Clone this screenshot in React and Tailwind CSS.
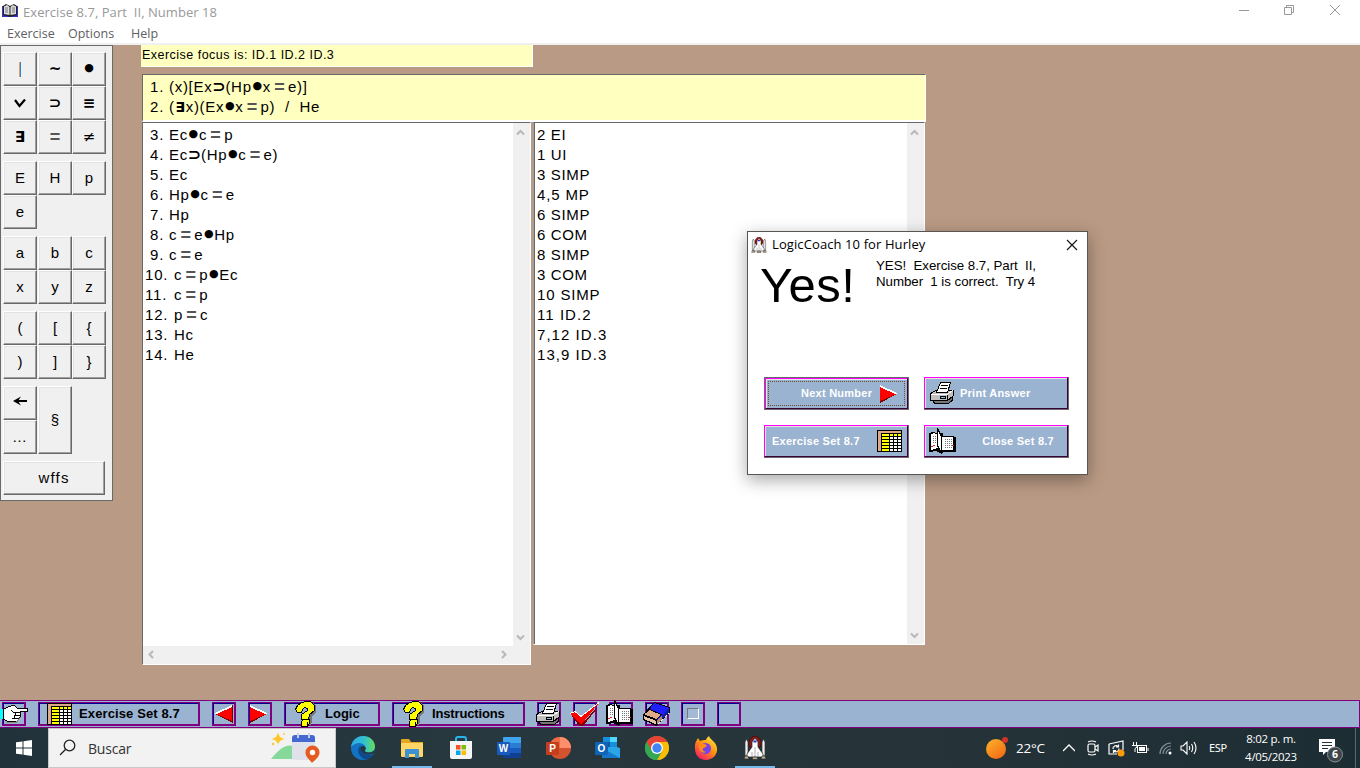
import React from "react";

const proof = [
  ["\u00a03.", "Ec●c=p", "2 EI"],
  ["\u00a04.", "Ec⊃(Hp●c=e)", "1 UI"],
  ["\u00a05.", "Ec", "3 SIMP"],
  ["\u00a06.", "Hp●c=e", "4,5 MP"],
  ["\u00a07.", "Hp", "6 SIMP"],
  ["\u00a08.", "c=e●Hp", "6 COM"],
  ["\u00a09.", "c=e", "8 SIMP"],
  ["10.", "c=p●Ec", "3 COM"],
  ["11.", "c=p", "10 SIMP"],
  ["12.", "p=c", "11 ID.2"],
  ["13.", "Hc", "7,12 ID.3"],
  ["14.", "He", "13,9 ID.3"],
];

function Sym({ c }) {
  if (c === "●")
    return <span className="inline-flex h-[18px] w-[11px] items-center justify-center align-top font-['DejaVu_Sans'] text-[11px] leading-[18px] tracking-normal">●</span>;
  if (c === "⊃")
    return <span className="inline-flex h-5 w-[13px] items-center justify-center align-top font-['DejaVu_Sans'] text-[16px] leading-5 font-bold tracking-normal">⊃</span>;
  if (c === "∃")
    return <span className="inline-flex h-5 w-[11px] items-center justify-center align-top font-['DejaVu_Sans'] text-[14px] leading-5 font-bold tracking-normal">∃</span>;
  if (c === "=")
    return <span className="inline-flex h-5 w-[17px] items-center justify-center align-top font-bold leading-5 tracking-normal text-[#555] text-[18px]">=</span>;
  return c;
}

function Formula({ n, f }) {
  return (
    <div className="flex h-5 leading-5 whitespace-pre">
      <span className={n.startsWith("\u00a0") ? "w-[24px] shrink-0 pl-[5px] tracking-[1px]" : "w-[29px] shrink-0 tracking-[0.800px]"}>{n.trim()}</span>
      <span>{[...f].map((c, i) => <Sym c={c} key={i} />)}</span>
    </div>
  );
}

const raised = "flex h-[34px] w-[34px] items-center justify-center border border-t-white border-l-white border-r-[#696969] border-b-[#696969] bg-[#f0f0f0] pt-px shadow-[inset_-1px_-1px_#a0a0a0,inset_1px_1px_#e3e3e3] text-[15px]";

function Key({ c }) {
  const sym = "⊃≡∃~".includes(c);
  return (
    <div className={raised}>
      {c === "|" ? (
        <span className="h-[15px] w-[2px] border-l border-[#d8a070] bg-[#2a86d8]" />
      ) : c === "●" ? (
        <span className="pb-[3px] font-['DejaVu_Sans'] text-[11px]">●</span>
      ) : c === "v" ? (
        <svg width="12" height="9" viewBox="0 0 12 9"><path d="M1 1L5.5 7L11 .5" fill="none" stroke="#000" strokeWidth="2.2" /></svg>
      ) : c === "←" ? (
        <svg width="14" height="10" viewBox="0 0 14 10" className="mb-[5px]"><path d="M2 5H14" stroke="#000" strokeWidth="2" /><path d="M0 5L8 .5L5 5L8 9.500Z" fill="#000" /></svg>
      ) : (
        <span className={sym ? "font-['DejaVu_Sans'] text-[15px] font-bold" : c === "≠" ? "font-['DejaVu_Sans'] text-[15px]" : c === "=" ? "text-[18px] font-bold text-[#555]" : c === "…" ? "tracking-[1px]" : ""}>{c}</span>
      )}
    </div>
  );
}

function Rows({ rows }) {
  return (
    <div className="grid grid-cols-[35px_34px_34px]">
      {rows.map((c, i) => <Key key={i} c={c} />)}
    </div>
  );
}

function Chevron({ d, className }) {
  return (
    <svg width="9" height="9" viewBox="0 0 9 9" className={className}>
      <path d={d} fill="none" stroke="#b8b8b8" strokeWidth="2" />
    </svg>
  );
}
const UP = "M1 6.500L4.500 3L8 6.500";
const DOWN = "M1 2.500L4.500 6L8 2.500";
const LEFT = "M6 1L2.500 4.500L6 8";
const RIGHT = "M3 1L6.500 4.500L3 8";

const TableIcon = ({ className }) => (
  <svg width="25" height="22" viewBox="0 0 25 22" shapeRendering="crispEdges" className={className}>
    <path d="M0 0H25V22H0Z" fill="#000" />
    <path d="M1 1H24V3H4V21H1Z" fill="#dca888" />
    <path d="M5 4H12V6H5ZM5 7H12V9H5ZM5 10H12V12H5ZM5 13H12V15H5ZM5 16H12V18H5ZM5 19H12V21H5ZM13 4H16V6H13ZM17 4H20V6H17ZM21 4H24V6H21Z" fill="#ff0" />
    <path d="M13 7H16V9H13ZM17 7H20V9H17ZM21 7H24V9H21ZM13 10H16V12H13ZM17 10H20V12H17ZM21 10H24V12H21ZM13 13H16V15H13ZM17 13H20V15H17ZM21 13H24V15H21ZM13 16H16V18H13ZM17 16H20V18H17ZM21 16H24V18H21ZM13 19H16V21H13ZM17 19H20V21H17ZM21 19H24V21H21Z" fill="#fff" />
  </svg>
);

const PrinterIcon = ({ className }) => (
  <svg width="25" height="22" viewBox="0 0 25 22" shapeRendering="crispEdges" className={className}>
    <path d="M3 18.500H17.500L22.500 15V18L18.500 21.500H5L3 20Z" fill="#777" stroke="#000" />
    <path d="M.5 11.500L6 8.500H23.500V13.500L17.500 18.500H.5Z" fill="#c0c0c0" stroke="#000" />
    <path d="M1 12H18L23 8" fill="none" stroke="#fff" />
    <path d="M17.500 13V18" stroke="#000" />
    <path d="M6.500 10.500L10.500 .5H20.500L17.500 10.500Z" fill="#fff" stroke="#000" />
    <path d="M11 3.500H18M10 6.500H17" stroke="#000" />
    <path d="M10.500 14.500H15.500V16.500H10.500Z" fill="#79c8f0" stroke="#000" />
  </svg>
);

const BookIcon = ({ className }) => (
  <svg width="27" height="26" viewBox="0 0 27 26" shapeRendering="crispEdges" className={className}>
    <path d="M14 8H25V9H27V24H14V25H11L7 23L0 24V5H2V4H6V5H14Z" fill="#000" />
    <path d="M2 6L5 5L9 7V20L2 22Z" fill="#fff" />
    <path d="M13 9H24V22H13Z" fill="#fff" />
    <path d="M8.500 .5L12.500 8.500V24.500L8.500 17.500Z" fill="#fff" stroke="#000" />
    <path d="M4 8.500H8M4 10.500H8M4 12.500H8M4 14.500H8M16 11.500H23M16 13.500H23M16 15.500H23M16 17.500H23M16 19.500H23" stroke="#777" strokeDasharray="1 1" />
    <path d="M2 18.500H4M4 17.500H6M23 17.500H25" fill="none" stroke="#e02020" />
  </svg>
);

const RightArrow = ({ className }) => (
  <svg width="18" height="18" viewBox="0 0 18 18" shapeRendering="crispEdges" className={className}>
    <path d="M0 1L17 9L0 18Z" fill="#700" />
    <path d="M0 1L17 9L0 16Z" fill="#f00" />
    <path d="M0 0L17 8V9H15L0 2Z" fill="#fff" />
  </svg>
);

const LeftArrow = ({ className }) => (
  <svg width="18" height="18" viewBox="0 0 18 18" shapeRendering="crispEdges" className={className}>
    <path d="M18 0V18L0 9Z" fill="#700" />
    <path d="M17 1V16L1 9Z" fill="#f00" />
    <path d="M17 0L0 8V9H2L17 2Z" fill="#fff" />
  </svg>
);

const Question = ({ className }) => (
  <svg width="24" height="26" viewBox="0 0 24 26" shapeRendering="crispEdges" className={className}>
    <path d="M8 2H18L21 5V11L17 15V20L16 24H12V14L15 9Z" fill="#777" />
    <path d="M.5 8.500L2.500 4.500L6.500 1.500L11.500 .5H15.500L19.500 4.500V9.500L14.500 13.500L13.500 18.500H6.500V13.500L12.500 9.500V7.500L9.500 6.500L7.500 8.500L6.500 11.500H2.500Z" fill="#ff0" stroke="#000" />
    <path d="M6.500 20.500L8.500 18.500H14.500V22.500L12.500 25.500H6.500Z" fill="#ff0" stroke="#000" />
    <path d="M12.500 21V25" fill="none" stroke="#000" />
  </svg>
);

const Hand = ({ className }) => (
  <svg width="29" height="20" viewBox="0 0 29 20" shapeRendering="crispEdges" className={className}>
    <path d="M0 5H4V15H0Z" fill="#0ff" />
    <path d="M3.500 5.500L8.500 2.500L14.500 1.500L17.500 4.500H27.500V7.500H20.500V11.500L19.500 14.500L16.500 17.500H8.500L3.500 15.500Z" fill="#fff" stroke="#000" />
    <path d="M11 6.500L14 8.500H20M15.500 9V11.500H20M14.500 11V14.500H19M12 14.500H17" fill="none" stroke="#000" />
    <path d="M6 18.500H16L21 13" fill="none" stroke="#888" />
  </svg>
);

const Check = ({ className }) => (
  <svg width="32" height="24" viewBox="0 0 32 24" shapeRendering="crispEdges" className={className}>
    <path d="M4 14L12 23L31 3L14 24H10L3 14Z" fill="#700" />
    <path d="M1 12L6 10L12 15L30 1L12 23Z" fill="#f00" />
    <path d="M12 23L31 2L14 24H11Z" fill="#700" />
    <path d="M1 11.500L6 9.500L12 14.500L30 .5" fill="none" stroke="#fff" />
  </svg>
);

const Eraser = ({ className }) => (
  <svg width="27" height="24" viewBox="0 0 27 24" shapeRendering="crispEdges" className={className}>
    <path d="M.5 12.500L11.500 .5L26.500 5.500V10.500L13.500 23.500L.5 17.500Z" fill="#2020ff" stroke="#000" />
    <path d="M.5 12.500L6.500 7.500L18.500 12.500L13.500 17.500Z" fill="#dcaa88" stroke="#000" />
    <path d="M.5 13.500L13.500 18.500V23L.5 17.500Z" fill="#e8c4a8" stroke="#000" />
    <path d="M14 18L19 13V17L14 22Z" fill="#b88868" />
    <path d="M19 13L26 6V10L19 17Z" fill="#1020a0" />
    <path d="M15 22L26 11" fill="none" stroke="#fff" strokeDasharray="1 1" />
  </svg>
);

const Rocket = ({ w, h, className }) => (
  <svg width={w} height={h} viewBox="0 0 22 24" className={className}>
    <path d="M5 9V5L8 1L11 0L14 1L17 5V9L15 12H7Z" fill="#8b1a1a" stroke="#300" strokeWidth=".6" />
    <path d="M1 6L2.500 3L4 6V20H1ZM21 6L19.500 3L18 6V20H21Z" fill="#eee" stroke="#333" strokeWidth=".7" />
    <path d="M11 2L14 6V11L19 18V21H3V18L8 11V6Z" fill="#fff" stroke="#222" strokeWidth=".7" />
    <path d="M9.500 4.500H12.500V6.500H9.500Z" fill="#2535d0" />
    <path d="M11 11V21M8 16V21M14 16V21" stroke="#999" strokeWidth=".8" />
    <path d="M1 20H4L5 23H0ZM18 20H21L22 23H17ZM9 21H13L14 23.500H8Z" fill="#b5a98c" stroke="#222" strokeWidth=".6" />
  </svg>
);

function DialogButton({ children, focused }) {
  return (
    <div className={"flex h-[33px] w-[145px] border-r border-b border-[#696969] " + (focused ? "border bg-[#696969]" : "")}>
      <div className="flex min-w-0 flex-1 border border-t-[#ff00ff] border-l-[#ff00ff] border-r-[#3a003a] border-b-[#3a003a] bg-[#9ab3d1] shadow-[inset_1px_1px_#e3e3e3]">
        <div className={"flex flex-1 items-center whitespace-nowrap text-[11px] font-bold tracking-[0.250px] text-white " + (focused ? "m-[2px] border border-dotted border-[#6a4a2a]" : "m-[3px]")}>{children}</div>
      </div>
    </div>
  );
}

const tool = "flex h-6 shrink-0 items-center border border-r-2 border-b-2 border-[#800080] shadow-[inset_1px_1px_#000090] text-[13px] font-bold whitespace-nowrap";

function Slot({ children, active }) {
  return (
    <div className={"flex h-10 w-[49px] items-center justify-center " + (active ? "bg-[linear-gradient(#76b9ed,#76b9ed)] bg-[length:40px_2px] bg-bottom bg-no-repeat" : "")}>{children}</div>
  );
}

function Office({ letter, color, children }) {
  return (
    <svg width="26" height="24" viewBox="0 0 26 24">
      {children}
      <rect x="0" y="6" width="13" height="13" rx="1" fill={color} />
      <text x="6.500" y="16.200" textAnchor="middle" fontFamily="Liberation Sans, sans-serif" fontWeight="bold" fontSize="10" fill="#fff">{letter}</text>
    </svg>
  );
}

export default function App() {
  return (
    <div className="relative flex h-[768px] w-[1360px] flex-col overflow-hidden bg-[#b99a84] font-['Liberation_Sans',sans-serif] text-black">
      <header className="flex h-[45px] shrink-0 flex-col border-b-2 border-[#f0f0f0] bg-white font-['Open_Sans',sans-serif] text-[13px]">
        <div className="flex h-[26px] items-center pl-[2px] text-[#999]">
          <svg width="16" height="14" viewBox="0 0 16 14" className="mb-[4px]">
            <path d="M0 2H16V13H0Z" fill="#3434c8" />
            <path d="M1 2L4 0L8 2L12 0L15 2V11L8 13L1 11Z" fill="#222" />
            <path d="M2 2.500L5 1L7.500 3V11L2 10ZM8.500 3L11 1L14 2.500V10L8.500 11Z" fill="#ddd" />
            <path d="M3 4H6M3 6H6M3 8H6M10 4H13M10 6H13M10 8H13" stroke="#777" />
          </svg>
          <span className="ml-[5px] text-[13px] tracking-[0.050px] whitespace-pre">Exercise 8.7, Part  II, Number 18</span>
          <svg width="102" height="12" viewBox="0 0 102 12" className="mr-[19px] mb-[6px] ml-auto" fill="none" stroke="#999">
            <path d="M0 6.500H10M45.500 3.500H52.500V10.500H45.500ZM47.500 3.500V1.500H54.500V8.500H52.500M91 1L101 11M101 1L91 11" />
          </svg>
        </div>
        <nav className="flex h-[17px] items-center pl-[7px] text-[12.500px] text-[#606060]">
          <span className="w-[61px]">Exercise</span>
          <span className="w-[63px]">Options</span>
          <span>Help</span>
        </nav>
      </header>

      <main className="flex h-[655px] shrink-0">
        <aside className="flex h-[456px] w-[113px] flex-col gap-[7px] border border-[#696969] bg-[#f0f0f0] pt-[6px] pl-[2px]">
          <Rows rows={["|", "~", "●", "v", "⊃", "≡", "∃", "=", "≠"]} />
          <Rows rows={["E", "H", "p", "e"]} />
          <Rows rows={["a", "b", "c", "x", "y", "z"]} />
          <Rows rows={["(", "[", "{", ")", "]", "}"]} />
          <div className="flex gap-px">
            <div><Key c="←" /><Key c="…" /></div>
            <div className={raised + " h-[68px]!"}>§</div>
          </div>
          <div className={raised + " w-[102px]! tracking-[1.200px]"}>wffs</div>
        </aside>

        <section className="ml-[29px] w-[784px] text-[15px] tracking-[0.700px]">
          <div className="-ml-px h-[22px] w-[392px] border-r border-b border-white bg-[#ffffc0] pl-px text-[12.500px] leading-[20px] tracking-[0.480px] whitespace-pre">Exercise focus is: ID.1 ID.2 ID.3</div>
          <div className="mt-[7px] h-[48px] border border-t-[#696969] border-r-[#fff] border-b-2 border-b-white border-l-[#696969] bg-[#ffffc0] pt-[2px] pl-[2px]">
            <Formula n={"\u00a01."} f="(x)[Ex⊃(Hp●x=e)]" />
            <Formula n={"\u00a02."} f="(∃x)(Ex●x=p)  /  He" />
          </div>
          <div className="flex items-start gap-[2px]">
            <div className="h-[543px] w-[389px] border border-t-[#696969] border-r-white border-b-white border-l-[#696969] bg-white">
              <div className="flex h-[523px]">
                <div className="flex-1 pt-[2px] pl-[2px]">
                  {proof.map((r) => <Formula key={r[0]} n={r[0]} f={r[1]} />)}
                </div>
                <div className="flex w-[17px] flex-col items-center justify-between bg-[#f0f0f0] pt-[5px] pb-[4px] pr-[2px]">
                  <Chevron d={UP} /><Chevron d={DOWN} />
                </div>
              </div>
              <div className="flex h-[18px] items-center justify-between bg-[#f0f0f0] pr-[22px] pb-[2px] pl-[4px]">
                <Chevron d={LEFT} /><Chevron d={RIGHT} />
              </div>
            </div>
            <div className="flex h-[523px] w-[392px] border border-t-[#696969] border-r-white border-b-white border-l-[#a0a0a0] bg-white shadow-[inset_1px_0_#696969]">
              <div className="flex-1 pt-[2px] pl-[3px]">
                {proof.map((r) => <div key={r[0]} className={"h-5 leading-5 " + (r[2].includes("ID") ? "tracking-[1.050px]" : r[2].startsWith("10") || r[2].startsWith("4") ? "tracking-[0.850px]" : "tracking-[0.650px]")}>{r[2]}</div>)}
              </div>
              <div className="flex w-[17px] flex-col items-center justify-between bg-[#f0f0f0] pt-[5px] pr-[2px] pb-[4px]">
                <Chevron d={UP} /><Chevron d={DOWN} />
              </div>
            </div>
          </div>
        </section>
      </main>

      <div className="flex h-7 shrink-0 gap-3 border-y border-r border-[#800080] bg-[#9ab3d1] pt-px pl-[2px]">
        <div className={tool + " w-6"}><Hand className="-ml-[3px] shrink-0" /></div>
        <div className={tool + " w-[162px]"}><TableIcon className="ml-[8px]" /><span className="ml-[7px] tracking-[0.120px]">Exercise Set 8.7</span></div>
        <div className={tool + " w-6"}><LeftArrow className="ml-[2px] shrink-0" /></div>
        <div className={tool + " w-6"}><RightArrow className="ml-px shrink-0" /></div>
        <div className={tool + " w-[96px]"}><Question className="ml-[10px] shrink-0" /><span className="ml-[6px]">Logic</span></div>
        <div className={tool + " w-[133px]"}><Question className="ml-[10px] shrink-0" /><span className="ml-[5px] tracking-[-0.150px]">Instructions</span></div>
        <div className={tool + " w-6"}><PrinterIcon className="-ml-[2px] shrink-0" /></div>
        <div className={tool + " w-6"}><Check className="-ml-[5px] shrink-0" /></div>
        <div className={tool + " w-6"}><BookIcon className="-mt-[2px] -ml-[4px] shrink-0" /></div>
        <div className={tool + " w-6"}><Eraser className="-ml-[3px] shrink-0" /></div>
        <div className={tool + " w-6 justify-center"}><span className="h-[11px] w-[12px] border border-t-[#777] border-l-[#777] border-r-white border-b-white bg-[#a4bad4]" /></div>
        <div className={tool + " w-6"} />
      </div>

      <footer className="flex h-10 shrink-0 bg-[linear-gradient(90deg,#22323b,#27383e_35%,#263439_65%,#1d2d34)] font-['Open_Sans',sans-serif] text-white">
        <div className="flex w-12 items-center justify-center">
          <svg width="16" height="16" viewBox="0 0 16 16" fill="#fff"><path d="M0 2.300L6.500 1.400V7.500H0ZM7.500 1.200L16 0V7.500H7.500ZM0 8.500H6.500V14.600L0 13.700ZM7.500 8.500H16V16L7.500 14.800Z" /></svg>
        </div>
        <div className="flex w-[288px] items-center border border-[#c8c8c8] bg-[#f2f2f2] text-[#333]">
          <svg width="18" height="18" viewBox="0 0 18 18" className="ml-[10px]" fill="none" stroke="#222" strokeWidth="1.300"><circle cx="10.500" cy="6.500" r="5.300" /><path d="M6.700 10.300L1 16" /></svg>
          <span className="ml-[11px] text-[14px] tracking-[-0.200px]">Buscar</span>
          <svg width="50" height="32" viewBox="0 0 50 32" className="mr-[14px] ml-auto">
            <path d="M0 27C8 17 15 12 21 14C25 18 27 22 29 27Z" fill="#86d99a" />
            <path d="M7 1L9 5L13 7L9 9L7 12L5 9L1 7L5 5ZM13 0L14 3L12 3Z" fill="#ffc72c" />
            <circle cx="2" cy="12" r="1.300" fill="#ffc72c" />
            <rect x="21" y="3" width="23" height="25" rx="3" fill="#dfe2ea" />
            <path d="M21 10V6Q21 3 24 3H41Q44 3 44 6V10Z" fill="#4467d2" />
            <path d="M27 1V6M38 1V6" stroke="#c8d0e0" strokeWidth="2" />
            <path d="M41 31C38 27 34.500 25 34.500 20.500A7 7 0 0 1 48.500 20.500C48.500 25 44 28 41 31Z" fill="#e55b20" /><circle cx="41.500" cy="20.500" r="2.700" fill="#fff" />
          </svg>
        </div>
        <div className="ml-[2px] flex">
          <Slot>
            <svg width="24" height="24" viewBox="0 0 24 24">
              <defs><linearGradient id="e1" x1="0" x2="1"><stop stopColor="#2ba9e5" /><stop offset=".55" stopColor="#32c1cf" /><stop offset="1" stopColor="#67dc59" /></linearGradient></defs>
              <circle cx="12" cy="12" r="12" fill="#1273c4" />
              <path d="M9 10C5 14 8 22 15 23.500A12 12 0 0 0 22.500 18C18 20 12 18 11 13Z" fill="#114a8b" />
              <path d="M0 11C1 4 6 0 12 0C19 0 24 5 24 10.500C24 14 21 16.500 18 16.500C15 16.500 13.500 15.500 14 14.500C17 9 8 3 0 11Z" fill="url(#e1)" />
              <path d="M9.500 12C10 9 14 9.500 14.800 12C15 13 14 14 14 14.500C13.500 15.500 15 16.500 18 16.500C20 16.500 22 15.600 23 14.500L24 13L23 17C18 20 10 18 9.500 12Z" fill="#25373e" />
            </svg>
          </Slot>
          <Slot active>
            <svg width="22" height="19" viewBox="0 0 22 19"><path d="M0 1Q0 0 1 0H8L10 3H22V6H0Z" fill="#e5a520" /><rect y="4" width="22" height="14" rx="1" fill="#ffd566" /><path d="M4 19V11Q4 10 5 10H17Q18 10 18 11V19H14V15H8V19Z" fill="#3c92d5" /></svg>
          </Slot>
          <Slot>
            <svg width="24" height="24" viewBox="0 0 24 24"><path d="M7 6V3Q7 1 9 1H15Q17 1 17 3V6" fill="none" stroke="#2ab2ec" strokeWidth="2" /><path d="M1 5H23V21Q23 23 21 23H3Q1 23 1 21Z" fill="#f5f5f5" /><path d="M7 9H11.500V13.500H7Z" fill="#f35325" /><path d="M12.500 9H17V13.500H12.500Z" fill="#81bc06" /><path d="M7 14.500H11.500V19H7Z" fill="#05a6f0" /><path d="M12.500 14.500H17V19H12.500Z" fill="#ffba08" /></svg>
          </Slot>
          <Slot>
            <Office letter="W" color="#185abd"><path d="M6 2Q6 1 7 1H24V7H6Z" fill="#41a5ee" /><path d="M6 7H24V12H6Z" fill="#2b7cd3" /><path d="M6 12H24V17H6Z" fill="#185abd" /><path d="M6 17H24V22H6Z" fill="#103f91" /></Office>
          </Slot>
          <Slot>
            <Office letter="P" color="#c43e1c"><circle cx="14" cy="12" r="11" fill="#d35230" /><path d="M14 1A11 11 0 0 1 25 12H14Z" fill="#ff8f6b" /><path d="M14 1A11 11 0 0 0 3 12H14Z" fill="#ed6c47" /></Office>
          </Slot>
          <Slot>
            <Office letter="O" color="#0f64b8"><path d="M8 1H22V12H8Z" fill="#1490df" /><path d="M15 1H22V6H15Z" fill="#50d9ff" /><path d="M8 6H15V12H8Z" fill="#0f5aa5" /><path d="M7 11H22L25 12V22H7Z" fill="#2aa5e8" /><path d="M7 12L25 22H7Z" fill="#1678c8" /></Office>
          </Slot>
          <Slot>
            <svg width="24" height="24" viewBox="0 0 24 24"><circle cx="12" cy="12" r="12" fill="#35a853" /><path d="M12 12L1.600 6A12 12 0 0 1 22.400 6Z" fill="#e94335" /><path d="M12 6H22.400A12 12 0 0 1 12 24L17.200 15Z" fill="#fbbc05" /><path d="M1.600 6L6.800 15L12 12L12 6Z" fill="#e94335" /><path d="M1.600 6L6.800 15L12 18L17 15L12 24A12 12 0 0 1 1.600 6Z" fill="#35a853" /><circle cx="12" cy="12" r="6" fill="#fff" /><circle cx="12" cy="12" r="4.700" fill="#4285f4" /></svg>
          </Slot>
          <Slot>
            <svg width="24" height="24" viewBox="0 0 24 24"><defs><linearGradient id="ff" x1=".9" y1="0" x2=".2" y2="1"><stop stopColor="#fff24a" /><stop offset=".45" stopColor="#ff980e" /><stop offset="1" stopColor="#f5156c" /></linearGradient></defs><path d="M1 9C1 6 3 4 4 2L6 5C8 4 10 4 12 4C12 2 14 1 15 0C16 4 22 5 23 12C24 19 18 24 12 24C5 24 0 19 1 9Z" fill="url(#ff)" /><circle cx="11.500" cy="12.500" r="5.500" fill="#7542e5" /><path d="M5 8L11 8L13 10L10 12C8 12 8 15 12 16C9 18 5 15 5 12Z" fill="#ff8a16" /></svg>
          </Slot>
          <Slot active><Rocket w={22} h={24} /></Slot>
        </div>
        <div className="ml-auto flex items-center">
          <svg width="22" height="22" viewBox="0 0 22 22"><defs><linearGradient id="sun" x1="0" y1="0" x2=".7" y2="1"><stop stopColor="#fbb52a" /><stop offset="1" stopColor="#f36c16" /></linearGradient></defs><circle cx="10" cy="12" r="10" fill="url(#sun)" /><circle cx="19" cy="3" r="3" fill="#d13425" /></svg>
          <span className="ml-[8px] w-[47px] text-[13.500px] tracking-[-0.200px]">22°C</span>
          <svg width="12" height="8" viewBox="0 0 12 8" fill="none" stroke="#fff" strokeWidth="1.300"><path d="M0 7L6 1L12 7" /></svg>
          <svg width="12" height="16" viewBox="0 0 12 16" className="ml-[12px]" fill="none" stroke="#fff" strokeWidth="1.200"><rect x="1" y="4" width="7" height="8" rx="1.500" /><path d="M8 7L11 5V11L8 9M1 2Q5 0 9 2M1 14Q5 16 9 14" /></svg>
          <svg width="17" height="17" viewBox="0 0 17 17" className="ml-[9px]" fill="none" stroke="#fff" strokeWidth="1.200"><path d="M1 4L15 1V10M1 4V14H9M5 9A3 3 0 0 1 10 6.500M10.500 4.500V7H8M11 8.500A3 3 0 0 1 6 11M5.500 13V10.500H8" /><circle cx="13" cy="13" r="3.500" fill="#ff9a0a" stroke="none" /></svg>
          <svg width="17" height="14" viewBox="0 0 17 14" className="ml-[7px]" fill="none" stroke="#fff"><rect x="5.500" y="4.500" width="9" height="7" /><rect x="7.500" y="6.500" width="5" height="3" fill="#fff" /><path d="M16 7V10M1.500 1V4M4.500 1V4M0 4.500H5V6L3 7.500V11" /></svg>
          <svg width="13" height="13" viewBox="0 0 13 13" className="ml-[10px]" fill="none" stroke="#839095" strokeWidth="1.200"><path d="M1 12A11 11 0 0 1 12 1M4 12A8 8 0 0 1 12 4M7 12A5 5 0 0 1 12 7" /><circle cx="11" cy="11" r="1.500" fill="#fff" stroke="none" /></svg>
          <svg width="17" height="14" viewBox="0 0 17 14" className="ml-[8px]" fill="none" stroke="#fff" strokeWidth="1.100"><path d="M1 5H3L7 1V13L3 9H1ZM9 5Q10.500 7 9 9M11.500 3Q14 7 11.500 11M14 1Q18 7 14 13" /></svg>
          <span className="ml-[12px] w-[18px] font-['Noto_Sans',sans-serif] text-[11px] tracking-[-0.300px]">ESP</span>
          <div className="ml-[14px] w-[60px] text-center text-[11.500px] leading-[18px] tracking-[-0.300px] whitespace-nowrap">
            <div>8:02 p. m.</div><div>4/05/2023</div>
          </div>
          <svg width="26" height="28" viewBox="0 0 26 28" className="mt-[3px] ml-[17px]"><path d="M1 3H17V16H8L5 19V16H1Z" fill="#fff" /><path d="M4 6.500H14M4 9.500H14M4 12.500H10" stroke="#223239" /><circle cx="17" cy="18.500" r="7.500" fill="#3c454a" stroke="#8a9195" /><text x="17" y="22.200" textAnchor="middle" fontFamily="Open Sans, sans-serif" fontSize="10.500" fontWeight="bold" fill="#fff">6</text></svg>
          <span className="ml-[11px] h-10 w-px bg-[#5d686d]" /><span className="w-1" />
        </div>
      </footer>

      <div className="absolute top-[231px] left-[747px] flex h-[244px] w-[341px] flex-col border border-[#5a5551] bg-white shadow-[0_5px_16px_rgba(0,0,0,0.35)]">
        <div className="flex h-6 items-center pt-px pl-[3px] font-['Open_Sans',sans-serif] text-[13px]">
          <Rocket w={16} h={16} />
          <span className="ml-[5px] tracking-[0.100px]">LogicCoach 10 for Hurley</span>
          <svg width="12" height="12" viewBox="0 0 12 12" className="mr-[9px] ml-auto" stroke="#111" strokeWidth="1.100"><path d="M1 1L11 11M11 1L1 11" /></svg>
        </div>
        <div className="flex h-[121px]">
          <div className="w-[128px] pl-[12px] text-[49px] leading-[58px] tracking-[0.400px]">Yes!</div>
          <div className="mt-[2px] text-[13.300px] leading-4 tracking-[-0.040px] whitespace-pre">{"YES!  Exercise 8.7, Part  II,\nNumber  1 is correct.  Try 4"}</div>
        </div>
        <div className="ml-4 grid grid-cols-[145px_145px] gap-x-[15px] gap-y-[15px]">
          <DialogButton focused><span className="ml-[32px]">Next Number</span><RightArrow className="ml-[8px]" /></DialogButton>
          <DialogButton><PrinterIcon className="ml-[2px]" /><span className="ml-[5px]">Print Answer</span></DialogButton>
          <DialogButton><span className="ml-[4px]">Exercise Set 8.7</span><TableIcon className="mr-[2px] ml-auto" /></DialogButton>
          <DialogButton><BookIcon className="ml-px" /><span className="mr-[10px] ml-auto">Close Set 8.7</span></DialogButton>
        </div>
      </div>
    </div>
  );
}
